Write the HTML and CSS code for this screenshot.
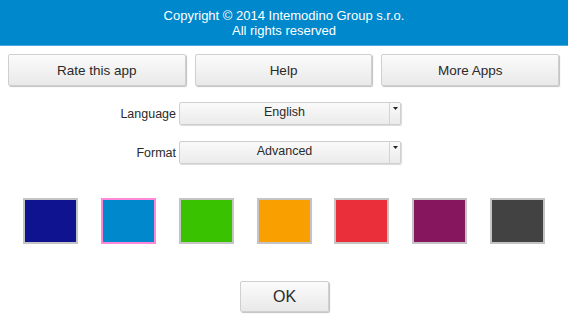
FILE: index.html
```html
<!DOCTYPE html>
<html>
<head>
<meta charset="utf-8">
<link rel="stylesheet" href="styles.css">
</head>
<body>
<header class="header">
  <div>Copyright © 2014 Intemodino Group s.r.o.</div>
  <div>All rights reserved</div>
</header>
<div class="actions">
  <button class="btn">Rate this app</button>
  <button class="btn">Help</button>
  <button class="btn">More Apps</button>
</div>
<div class="form">
  <div class="row">
    <span class="label">Language</span>
    <div class="select"><span class="value">English</span><span class="arrow"><svg width="5" height="3" viewBox="0 0 5 3"><path d="M0 0H5L2.5 3Z" fill="#222"/></svg></span></div>
  </div>
  <div class="row">
    <span class="label">Format</span>
    <div class="select"><span class="value">Advanced</span><span class="arrow"><svg width="5" height="3" viewBox="0 0 5 3"><path d="M0 0H5L2.5 3Z" fill="#222"/></svg></span></div>
  </div>
</div>
<div class="swatches">
  <div class="swatch navy"></div>
  <div class="swatch blue selected"></div>
  <div class="swatch green"></div>
  <div class="swatch orange"></div>
  <div class="swatch red"></div>
  <div class="swatch purple"></div>
  <div class="swatch dark"></div>
</div>
<div class="footer">
  <button class="btn ok">OK</button>
</div>
</body>
</html>
```

FILE: styles.css
```css
html, body {
  margin: 0;
  padding: 0;
  background: #ffffff;
  font-family: "Liberation Sans", Arial, sans-serif;
  width: 568px;
  height: 320px;
  overflow: hidden;
}
.header {
  height: 46px;
  box-sizing: border-box;
  background: #0088cc;
  border-bottom: 1px solid #4aa8dc;
  color: #ffffff;
  font-size: 13px;
  line-height: 15px;
  display: flex;
  flex-direction: column;
  justify-content: center;
  align-items: center;
  padding-top: 1px;
}
.actions {
  display: flex;
  gap: 9px;
  padding: 0 9px 0 8px;
  margin-top: 8px;
}
.btn {
  flex: 1;
  height: 32px;
  box-sizing: border-box;
  border: 1px solid #cfcfcf;
  border-radius: 2px;
  background: linear-gradient(#fbfbfb, #e9e9e9);
  box-shadow: 1px 1px 1px rgba(0,0,0,0.25);
  font-family: "Liberation Sans", Arial, sans-serif;
  font-size: 13.5px;
  color: #2a2a2a;
  padding: 0;
}
.form {
  margin-top: 16px;
  display: flex;
  flex-direction: column;
  gap: 16px;
}
.row {
  display: flex;
  align-items: center;
  gap: 3px;
}
.label {
  width: 176px;
  text-align: right;
  font-size: 12.5px;
  color: #2a2a2a;
}
.select {
  width: 222px;
  height: 23px;
  box-sizing: border-box;
  border: 1px solid #cfcfcf;
  border-radius: 2px;
  background: linear-gradient(#fafafa, #ebebeb);
  box-shadow: 1px 1px 1px rgba(0,0,0,0.15);
  display: flex;
}
.value {
  flex: 1;
  text-align: center;
  font-size: 12.5px;
  color: #2a2a2a;
  line-height: 18px;
}
.arrow {
  width: 11px;
  border-left: 1px solid #d4d4d4;
  display: flex;
  justify-content: center;
  padding-top: 4px;
  box-sizing: border-box;
}
.arrow svg { display: block; }
.swatches {
  margin-top: 34px;
  display: flex;
  justify-content: space-evenly;
}
.swatch {
  width: 55px;
  height: 46px;
  box-sizing: border-box;
  border: 2px solid #c4c4c4;
}
.swatch.selected { border-color: #ff88d8; }
.navy { background: #10138f; }
.blue { background: #0088cc; }
.green { background: #39c200; }
.orange { background: #f9a000; }
.red { background: #ea2f3a; }
.purple { background: #86165e; }
.dark { background: #424242; }
.footer {
  margin-top: 37px;
  display: flex;
  justify-content: center;
}
.btn.ok {
  flex: none;
  width: 89px;
  height: 31px;
  font-size: 16px;
  margin-left: 1px;
}
```
